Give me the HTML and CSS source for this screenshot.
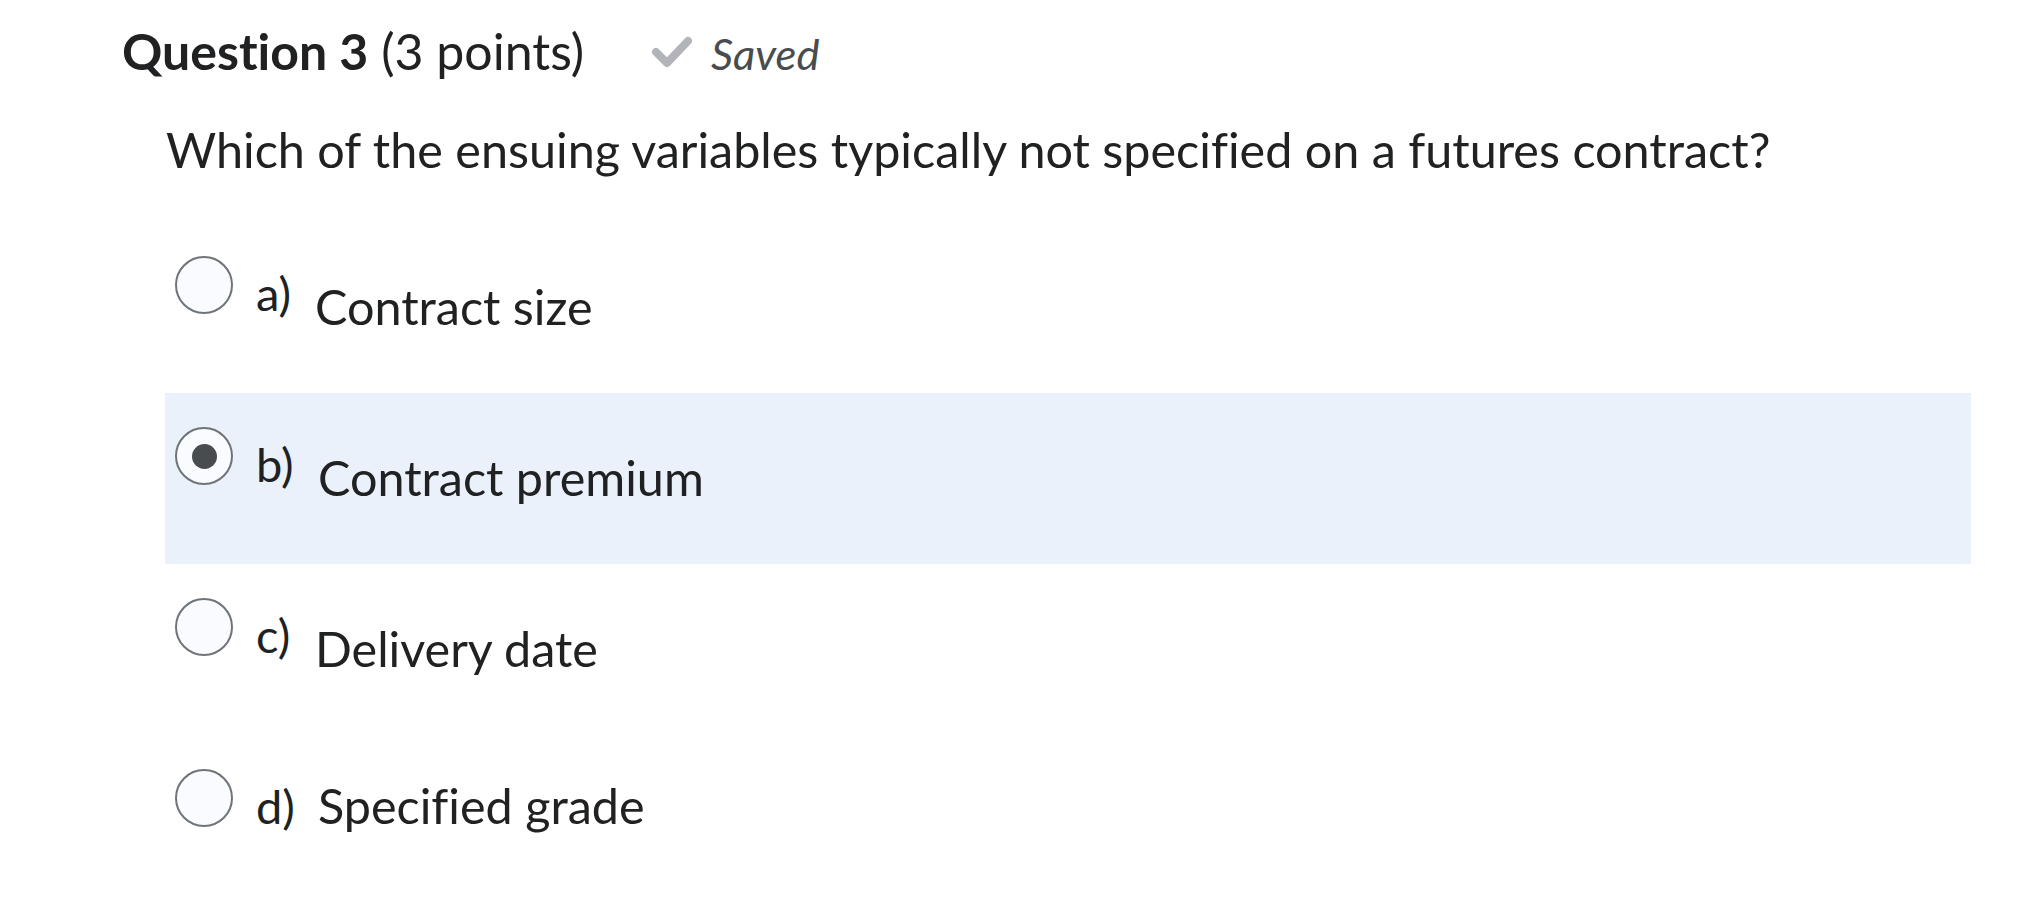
FILE: index.html
```html
<!DOCTYPE html>
<html lang="en">
<head>
<meta charset="utf-8">
<title>Question 3</title>
<link rel="stylesheet" href="styles.css">
</head>
<body>
<div class="page">
  <div class="qhead">
    <h2 class="qtitle"><strong>Question 3</strong> <span class="pts">(3 points)</span></h2>
    <div class="saved">
      <svg class="check" viewBox="0 0 44 36" width="44" height="36" aria-hidden="true">
        <polyline points="6,17 17,28 38,6" fill="none" stroke="#b1b5b9" stroke-width="8" stroke-linecap="round" stroke-linejoin="round"/>
      </svg>
      <span class="saved-text">Saved</span>
    </div>
  </div>
  <p class="qtext">Which of the ensuing variables typically not specified on a futures contract?</p>
  <div class="options">
    <label class="opt">
      <span class="radio"></span>
      <span class="letter">a)</span>
      <span class="otext">Contract size</span>
    </label>
    <label class="opt selected">
      <span class="radio checked"><span class="dot"></span></span>
      <span class="letter">b)</span>
      <span class="otext shift">Contract premium</span>
    </label>
    <label class="opt">
      <span class="radio"></span>
      <span class="letter">c)</span>
      <span class="otext">Delivery date</span>
    </label>
    <label class="opt">
      <span class="radio"></span>
      <span class="letter">d)</span>
      <span class="otext inline shift">Specified grade</span>
    </label>
  </div>
</div>
</body>
</html>
```
FILE: styles.css
```css
html, body {
  margin: 0;
  padding: 0;
  background: #ffffff;
}
body {
  font-family: Lato, "Open Sans", "Liberation Sans", sans-serif;
  color: #202122;
  font-variant-ligatures: no-common-ligatures;
}
.qhead {
  display: flex;
  align-items: baseline;
  padding: 21px 0 0 122px;
}
.qtitle {
  margin: 0;
  font-size: 50px;
  line-height: 60px;
  font-weight: 400;
  color: #202122;
}
.qtitle strong {
  font-weight: 700;
}
.saved {
  display: flex;
  align-items: baseline;
  margin-left: 66px;
  color: #494c4e;
}
.check {
  align-self: center;
  margin-right: 17px;
}
.saved-text {
  font-style: italic;
  font-size: 43.5px;
  line-height: 52px;
}
.qtext {
  margin: 0;
  padding: 39px 0 0 166px;
  font-size: 48.5px;
  line-height: 58px;
}
.options {
  margin: 44px 0 0 165px;
  width: 1806px;
}
.opt {
  display: flex;
  align-items: flex-start;
  height: 171px;
  padding-left: 10px;
  box-sizing: border-box;
}
.opt.selected {
  background: #eaf1fb;
}
.radio {
  width: 58px;
  height: 58px;
  box-sizing: border-box;
  border: 2.5px solid #6f7479;
  border-radius: 50%;
  background: #f9fbff;
  margin-top: 34px;
  display: flex;
  align-items: center;
  justify-content: center;
  flex: none;
}
.dot {
  width: 25px;
  height: 25px;
  border-radius: 50%;
  background: #494c4e;
}
.letter {
  font-size: 47px;
  line-height: 58px;
  margin-top: 42px;
  margin-left: 23px;
  width: 59px;
  flex: none;
}
.otext {
  font-size: 48.5px;
  line-height: 58px;
  margin-top: 55px;
}
.otext.shift {
  margin-left: 3px;
}
.otext.inline {
  margin-top: 41px;
}
```
